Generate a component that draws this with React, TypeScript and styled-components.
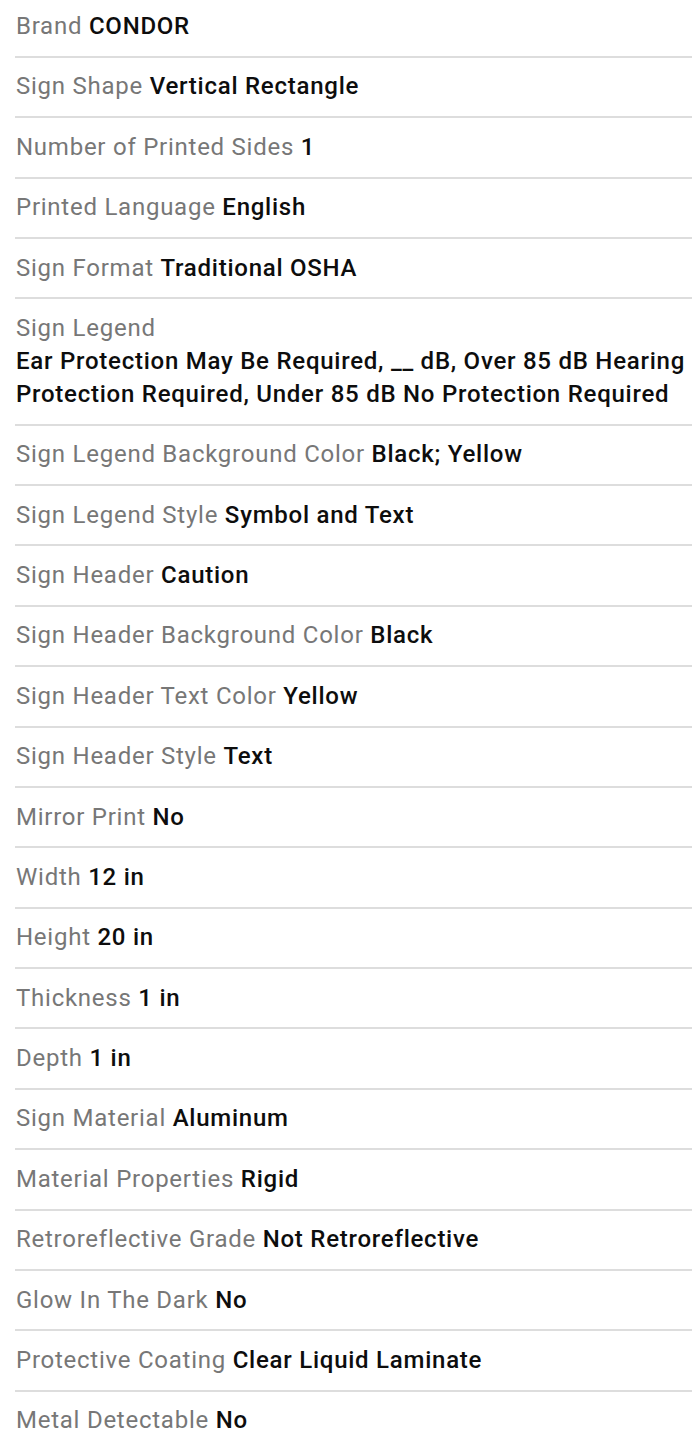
import React from 'react';
import styled, { createGlobalStyle } from 'styled-components';

const GlobalStyle = createGlobalStyle`
  html, body {
    margin: 0;
    padding: 0;
    background: #ffffff;
  }
  body {
    font-family: Roboto, 'Noto Sans', 'Liberation Sans', sans-serif;
  }
`;

const SpecList = styled.ul`
  list-style: none;
  margin: -2.6px 4px 0 15px;
  padding: 0;
`;

const SpecRow = styled.li`
  padding: 12.7px 0 12.7px 1px;
  border-bottom: 2px solid #dddddd;
  font-size: 24px;
  line-height: 33px;
  letter-spacing: 0.75px;
`;

const Label = styled.span<{ $block?: boolean }>`
  color: #777777;
  font-weight: 400;
  display: ${(p) => (p.$block ? 'block' : 'inline')};
`;

const Value = styled.span`
  color: #0d0d0d;
  font-weight: 500;
`;

const specs: [string, string, boolean?][] = [
  ['Brand', 'CONDOR'],
  ['Sign Shape', 'Vertical Rectangle'],
  ['Number of Printed Sides', '1'],
  ['Printed Language', 'English'],
  ['Sign Format', 'Traditional OSHA'],
  ['Sign Legend', 'Ear Protection May Be Required, __ dB, Over 85 dB Hearing Protection Required, Under 85 dB No Protection Required', true],
  ['Sign Legend Background Color', 'Black; Yellow'],
  ['Sign Legend Style', 'Symbol and Text'],
  ['Sign Header', 'Caution'],
  ['Sign Header Background Color', 'Black'],
  ['Sign Header Text Color', 'Yellow'],
  ['Sign Header Style', 'Text'],
  ['Mirror Print', 'No'],
  ['Width', '12 in'],
  ['Height', '20 in'],
  ['Thickness', '1 in'],
  ['Depth', '1 in'],
  ['Sign Material', 'Aluminum'],
  ['Material Properties', 'Rigid'],
  ['Retroreflective Grade', 'Not Retroreflective'],
  ['Glow In The Dark', 'No'],
  ['Protective Coating', 'Clear Liquid Laminate'],
  ['Metal Detectable', 'No'],
];

const App: React.FC = () => {
  return (
    <>
      <GlobalStyle />
      <SpecList>
        {specs.map(([label, value, block]) => (
          <SpecRow key={label}>
            <Label $block={block}>{label}</Label>
            {block ? '' : ' '}
            <Value>{value}</Value>
          </SpecRow>
        ))}
      </SpecList>
    </>
  );
};

export default App;
